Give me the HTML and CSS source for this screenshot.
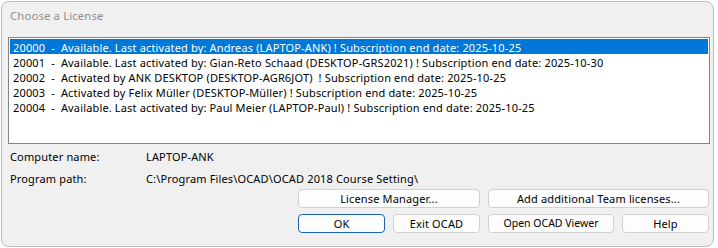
FILE: index.html
```html
<!DOCTYPE html>
<html lang="en">
<head>
  <meta charset="UTF-8">
  <meta name="viewport" content="width=device-width, initial-scale=1.0">
  <title>Choose a License</title>
  <link rel="stylesheet" href="styles.css">
</head>
<body>
  <div class="dialog">
    <header class="dialog-title">Choose a License</header>
    <main class="dialog-body">
      <ul class="license-list">
        <li class="selected">20000  -  Available. Last activated by: Andreas (LAPTOP-ANK) ! Subscription end date: 2025-10-25</li>
        <li>20001  -  Available. Last activated by: Gian-Reto Schaad (DESKTOP-GRS2021) ! Subscription end date: 2025-10-30</li>
        <li>20002  -  Activated by ANK DESKTOP (DESKTOP-AGR6JOT)  ! Subscription end date: 2025-10-25</li>
        <li>20003  -  Activated by Felix Müller (DESKTOP-Müller) ! Subscription end date: 2025-10-25</li>
        <li>20004  -  Available. Last activated by: Paul Meier (LAPTOP-Paul) ! Subscription end date: 2025-10-25</li>
      </ul>

      <div class="info">
        <span>Computer name:</span>
        <span>LAPTOP-ANK</span>
        <span>Program path:</span>
        <span>C:\Program Files\OCAD\OCAD 2018 Course Setting\</span>
      </div>

      <div class="buttons">
        <button class="btn wide-left">License Manager...</button>
        <button class="btn wide-right">Add additional Team licenses...</button>
        <button class="btn default">OK</button>
        <button class="btn">Exit OCAD</button>
        <button class="btn small">Open OCAD Viewer</button>
        <button class="btn">Help</button>
      </div>
    </main>
  </div>
</body>
</html>
```

FILE: styles.css
```css
body {
  margin: 0;
  background: #ffffff;
  font-family: "Noto Sans", sans-serif;
  font-size: 11px;
  letter-spacing: 0.15px;
  color: #000;
}

.dialog {
  margin: 1px 0 0 1px;
  width: 711px;
  height: 244px;
  border: 1px solid #bcbcbc;
  border-radius: 8px;
  background: #f0f0f0;
  overflow: hidden;
}

.dialog-title {
  height: 29px;
  padding: 6px 0 0 8px;
  line-height: 16px;
  font-size: 11.3px;
  color: #8f8f8f;
}

.dialog-body {
  padding: 0 3px 0 6px;
}

.license-list {
  list-style: none;
  margin: 0;
  padding: 1px;
  height: 103px;
  border: 1px solid #858585;
  background: #fff;
}

.license-list li {
  height: 15px;
  line-height: 17px;
  padding-left: 3px;
  white-space: pre;
}

.license-list li.selected {
  background: #0078d7;
  color: #fff;
}

.info {
  display: grid;
  grid-template-columns: 136px 1fr;
  grid-template-rows: 21px 22px;
  align-items: center;
  margin-top: 2px;
  padding-left: 2px;
}

.buttons {
  display: grid;
  grid-template-columns: 87px 87px 126px 87px;
  grid-auto-rows: 19px;
  gap: 6px 8px;
  justify-content: end;
  margin-right: 1px;
}

.btn {
  font: inherit;
  letter-spacing: inherit;
  color: #000;
  margin: 0;
  padding: 0;
  background: #fdfdfd;
  border: 1px solid #d0d0d0;
  border-radius: 4px;
  line-height: 17px;
}

.btn.wide-left {
  grid-column: 1 / 3;
}

.btn.wide-right {
  grid-column: 3 / 5;
}

.btn.default {
  border-color: #1b64b0;
}

.btn.small {
  font-size: 10.5px;
  letter-spacing: 0;
}
```
